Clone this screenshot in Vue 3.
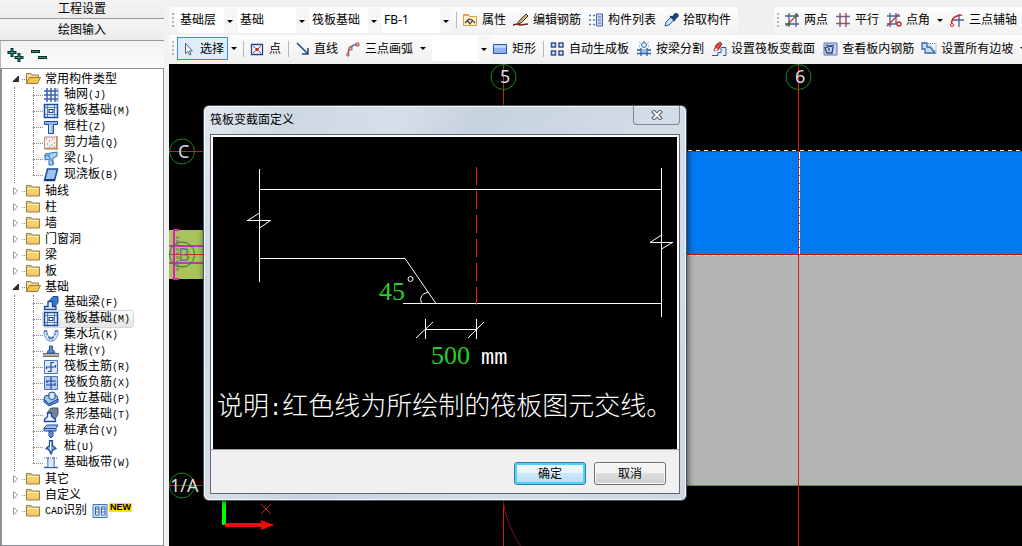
<script setup>
import { ref } from 'vue'

const icons = {
  folder: '<path d="M1.5 4V2.5H6l1 1.500h7.500v9h-13z" fill="#f3c766" stroke="#9c7a3c"/><path d="M2 6h12v4H2z" fill="#f7cf6c"/><path d="M2 5.500h12" stroke="#fdf0c0"/>',
  folderOpen: '<path d="M1.500 12V2.500H6l1 1.500h6.500V7" fill="#f7dc95" stroke="#9c7a3c"/><path d="M1.500 12.500L4.500 6.500H15.500L12.500 12.500z" fill="#f3c44f" stroke="#9c7a3c"/>',
  grid: '<path d="M1 4h14M1 8h14M1 12h14M4 1v14M8 1v14M12 1v14" stroke="#3a62b4" stroke-width="1.500" fill="none"/><path d="M13 2h2v12h-2" stroke="#7d9cd4" fill="none"/>',
  raft: '<path d="M1.500 1.500h13v13h-13z" fill="#e6f0fc" stroke="#1b4a98" stroke-width="1.500"/><path d="M4.500 2v12M11.500 2v12M2 4.500h12M2 11.500h12" stroke="#3b69b4" stroke-width=".8"/><path d="M6 6.500h4v3H6z" fill="#fff" stroke="#1b4a98" stroke-width="1.200"/>',
  column: '<path d="M1.500 2.500h13v3h-4v9h-5v-9h-4z" fill="#8db7ee" stroke="#1b4a98"/><path d="M7 6v8" stroke="#e8f3ff" stroke-width="1.500"/>',
  wall: '<path d="M1.500 2h12v12h-12z" fill="#f4efec" stroke="#b98f7a"/><path d="M3 4h1M6 6h1M9 4h1M4 9h1M8 10h1M11 8h1M6 12h1M11 12h1" stroke="#7a6d6a" stroke-width="1.200"/><path d="M14 1v14M1 13.500h13" stroke="#c98a52" stroke-width="1.500"/>',
  beam: '<path d="M2 3l12-2v4l-4 2v7H6V8L2 9z" fill="#a9d2f4" stroke="#2d73b8"/><path d="M5 4l6 9M2 5l5-1" stroke="#2d73b8"/>',
  slab: '<path d="M4.500 2h10l-3 11.500h-10z" fill="#9cc3f2" stroke="#1b4a98" stroke-width="1.500"/><path d="M2 13h9.500" stroke="#12366f" stroke-width="2"/>',
  fbeam: '<path d="M5 7l5-5.500h5v6l-5 6" fill="#3f78c2" stroke="#1b4a98"/><path d="M1.500 14.500v-3H5v-5h4.500v5H13v3z" fill="#dcebfc" stroke="#1b4a98" stroke-width="1.300"/>',
  pit: '<path d="M1 4h3l1 5q3 3 6 0l1-5h3v4l-3 5q-4 3-8 0L1 8z" fill="#d4e3f8" stroke="#5b86c6" stroke-width=".8"/><path d="M1 4h3M12 4h3M3 7h1M12 7h1M6 12h1M9 13h1M5 10q3 3 6 0" stroke="#1b4a98"/>',
  pier: '<path d="M0 10.500h16v3H0z" fill="#b5b2ad" stroke="#716e69"/><path d="M4 10l1.500-3h1V3h3v4h1L12 10z" fill="#5d8ed1" stroke="#2456a4"/>',
  mainbar: '<path d="M1.500 1.500h13v13h-13z" fill="#dbe7fa" stroke="#4d76bb"/><path d="M8 3v10M3 8h10M8 3.500h3M5 12.500h3M3.500 8v2M12.500 6v2" stroke="#1b4a98" stroke-width="1.200" fill="none"/>',
  negbar: '<path d="M1.500 1.500h13v13h-13z" fill="#b9cdf0" stroke="#4d76bb"/><path d="M8 2v12M3 6h10M3 10h10M4 6v2M12 10V8" stroke="#1b4a98" stroke-width="1.200" fill="none"/>',
  pad: '<path d="M1 8l5 5 9-4-1-4-4-2-8 2z" fill="#a5c8ef" stroke="#1b4a98"/><path d="M1 8v3l5 4 9-4V8l-9 5z" fill="#5f92d4" stroke="#1b4a98"/><path d="M6 7V2l3-1 3 1v5L9 9z" fill="#d9e9fb" stroke="#1b4a98"/>',
  strip: '<path d="M4 6l4-5h7v6l-4 7" fill="#738499" stroke="#3c526e"/><path d="M1.500 14.500v-2l3-3V6h4v3.500l4 3v2z" fill="#edf4fd" stroke="#1b4a98" stroke-width="1.300"/>',
  cap: '<path d="M1 5l3-3h11l-2 3v3H1z" fill="#9dc2ed" stroke="#1b4a98"/><path d="M1.500 5.500h11" stroke="#1b4a98"/><path d="M6 8h4v5l-2 2-2-2z" fill="#5f90d1" stroke="#1b4a98"/>',
  pile: '<path d="M6.500 1.500h3V7h1L13 9.500 10 11l-2 4-2-4-3-1.500L5.500 7h1z" fill="#7ba7e0" stroke="#1b4a98" stroke-width="1.200"/><path d="M7.500 3v8" stroke="#fff"/>',
  band: '<path d="M1 12.500h14M5 2v11M11 2v11" stroke="#3a62a4" stroke-width="1.300"/><path d="M5.500 4h5v8h-5z" fill="#d9e5f6"/><path d="M1 3h14" stroke="#3a62a4" stroke-dasharray="1 1"/>',
  cad: '<path d="M1 1.500h14v13H1z" fill="#cfe0f8" stroke="#3c74bd"/><path d="M3.500 4h3.500v8H3.500zM9.500 4H13v8H9.500z" fill="#fff" stroke="#2e62ac"/><path d="M3.500 6h3.500M3.500 9h3.500M9.500 6H13M9.500 9H13" stroke="#2e62ac"/>',
  prop: '<path d="M1.500 13.500V2.500h5l1 2h7v9z" fill="#fff2cf" stroke="#e09a3c"/><path d="M1 3h6" stroke="#e8a34a" stroke-width="2"/><path d="M3 11l4-4 3 1 3 3M5 8l3 4 2-3" stroke="#44463f" stroke-width="1.300" fill="none"/>',
  pen: '<path d="M0 13l4-1 3 1 8-1" stroke="#6b2323" fill="none" stroke-width="1.500"/><path d="M5 10L13 2l2 2-7 7-3 1z" fill="#d2ae72" stroke="#443629"/>',
  list: '<path d="M8.500 2h6v12h-6z" fill="#cddcf2" stroke="#45679d"/><path d="M10 5h3M10 8h3M10 11h3" stroke="#45679d"/><path d="M1 3.500h2M1 8h2M1 12.500h2M5 3.500h2M5 8h2M5 12.500h2" stroke="#4b76b8" stroke-width="1.500"/>',
  pick: '<path d="M2 14l1-4 6-6 3 3-6 6z" fill="#c9e0f7" stroke="#27588f"/><path d="M7 4l5 5M9 6l3-4q3-1 3 2l-4 4z" fill="#1f4b86" stroke="#163c70" stroke-width="1.500"/>',
  twop: '<path d="M1 4h14M1 12h14M5 1v14M12 1v14" stroke="#4a5f96" stroke-width="1.300"/><path d="M2 14L14 2" stroke="#b43a3a" stroke-width="1.300"/><path d="M4 11h2v2H4zM11 3h2v2h-2z" fill="#26843a" stroke="#26843a"/>',
  para: '<path d="M1 4.500h14M1 11.500h14" stroke="#5a6da6" stroke-width="1.500"/><path d="M5 1v14M11 1v14" stroke="#b0343e" stroke-width="1.300"/>',
  angle: '<path d="M1 4h13M1 12h10M4 1v14M10 1v11" stroke="#4a5f96" stroke-width="1.300"/><path d="M1 14L13 2" stroke="#b43a3a" stroke-width="1.300"/><circle cx="13" cy="12" r="2" fill="#fff" stroke="#d32323" stroke-width="1.300"/>',
  aux: '<path d="M3 8h12M10 2v13" stroke="#4a5f96" stroke-width="1.300"/><path d="M3 13Q1 4 13 3" stroke="#d32323" stroke-width="1.500" fill="none"/><circle cx="3" cy="13" r="1.500" fill="#fff" stroke="#d32323"/>',
  cursor: '<path d="M5.500 2.500v10l2.300-2 1.700 3.500 1.500-.7-1.600-3.300h3z" fill="#fff" stroke="#4d5f82"/>',
  point: '<path d="M2.500 3.500h11v10h-11z" fill="#fff" stroke="#2a3f8a" stroke-width="1.300"/><path d="M4 5l8 7M12 5l-8 7" stroke="#3c50a8"/><path d="M6.500 7h3v3h-3z" fill="#c82d2d"/>',
  line: '<path d="M3 2l11 11M14 7v6H8" stroke="#234a78" stroke-width="1.500" fill="none"/>',
  arc: '<path d="M3 14Q3 4 13 3" stroke="#3a62b4" stroke-width="1.500" fill="none"/><path d="M2 12h2v3H2zM4 6h3v3H4zM11 2h3v3h-3z" fill="#e9b0a0" stroke="#b0402c" stroke-width=".8"/>',
  rect: '<path d="M1.500 3.500h13v9h-13z" fill="#8fb4ec" stroke="#2a56a5"/><path d="M2 4h12v3H2z" fill="#bcd4f6"/>',
  auto: '<path d="M2.500 2h4v4h-4zM10 2h4v4h-4zM2.500 10h4v4h-4zM10 10h4v4h-4z" fill="#dfe9f8" stroke="#33538f" stroke-width="1.500"/>',
  split: '<path d="M1 9h4M11 9h4M1 12.500h14M5 7v8M11 7v8" stroke="#2d5da6" stroke-width="1.300"/><path d="M6 8h4v4H6z" fill="#8fc1ee"/><circle cx="8" cy="4" r="2.500" fill="#dbeafb" stroke="#3b74b8"/><path d="M8 0v1M3.500 1.500l1 1M12.500 1.500l-1 1M3 5h1M12 5h1" stroke="#3b74b8"/>',
  section: '<path d="M1 14.500h6v-3h3v-5h5v8h-3" fill="#e3ecfa" stroke="#3158a0"/><path d="M3 10l2-6 4-3 2 2-4 6z" fill="#e04a3d" stroke="#9c2e26"/><path d="M3 10l2-3 2 2z" fill="#fff"/>',
  view: '<path d="M2 2h13v12H2z" fill="#c2d2ee" stroke="#5676b5"/><path d="M4 4l7 2-1 6H5L3 7l9-3M7 7v3" stroke="#28457b" stroke-width="1.300" fill="none"/>',
  slope: '<path d="M1 2h5v4h3l5 6H4V8H1z" fill="#c9dcf6" stroke="#2d67b2" stroke-width="1.300"/><path d="M7 2.500h8v10M8 3l7 8" stroke="#5d86c2" stroke-dasharray="1 1" fill="none"/>',
}

const tree = [
  {
    label: '常用构件类型', open: true, children: [
      { icon: 'grid', label: '轴网', key: '(J)' },
      { icon: 'raft', label: '筏板基础', key: '(M)' },
      { icon: 'column', label: '框柱', key: '(Z)' },
      { icon: 'wall', label: '剪力墙', key: '(Q)' },
      { icon: 'beam', label: '梁', key: '(L)' },
      { icon: 'slab', label: '现浇板', key: '(B)' },
    ],
  },
  { label: '轴线' },
  { label: '柱' },
  { label: '墙' },
  { label: '门窗洞' },
  { label: '梁' },
  { label: '板' },
  {
    label: '基础', open: true, children: [
      { icon: 'fbeam', label: '基础梁', key: '(F)' },
      { icon: 'raft', label: '筏板基础', key: '(M)', selected: true },
      { icon: 'pit', label: '集水坑', key: '(K)' },
      { icon: 'pier', label: '柱墩', key: '(Y)' },
      { icon: 'mainbar', label: '筏板主筋', key: '(R)' },
      { icon: 'negbar', label: '筏板负筋', key: '(X)' },
      { icon: 'pad', label: '独立基础', key: '(P)' },
      { icon: 'strip', label: '条形基础', key: '(T)' },
      { icon: 'cap', label: '桩承台', key: '(V)' },
      { icon: 'pile', label: '桩', key: '(U)' },
      { icon: 'band', label: '基础板带', key: '(W)' },
    ],
  },
  { label: '其它' },
  { label: '自定义' },
  { prefix: 'CAD', label: '识别', isNew: true },
]

const combos = [
  { name: '楼层', value: '基础层', size: 'w58' },
  { name: '构件分类', value: '基础', size: 'w70' },
  { name: '构件类型', value: '筏板基础', size: 'w70' },
  { name: '构件名称', value: 'FB-1', size: 'w70' },
]

const componentTools = [
  { icon: 'prop', label: '属性' },
  { icon: 'pen', label: '编辑钢筋' },
  { icon: 'list', label: '构件列表' },
  { icon: 'pick', label: '拾取构件' },
]

const axisTools = [
  { icon: 'twop', label: '两点' },
  { icon: 'para', label: '平行' },
  { icon: 'angle', label: '点角', menu: true },
  { icon: 'aux', label: '三点辅轴' },
]

const slabTools = [
  { icon: 'auto', label: '自动生成板' },
  { icon: 'split', label: '按梁分割' },
  { icon: 'section', label: '设置筏板变截面' },
  { icon: 'view', label: '查看板内钢筋' },
  { icon: 'slope', label: '设置所有边坡', menu: true },
]

const dialogOpen = ref(true)
</script>

<template>
  <div class="app">
    <aside class="side">
      <button class="side-tab first">工程设置</button>
      <button class="side-tab">绘图输入</button>
      <div class="side-tools">
        <button class="plain" aria-label="全部展开">
          <svg width="18" height="16"><path d="M5 1v9M.5 5.500h9M12 6v9M7.500 10.500h9" stroke="#0b2d29" stroke-width="3" /><path d="M5 2v7M1.500 5.500h7M12 7v7M8.500 10.500h7" stroke="#1f9a83" /></svg>
        </button>
        <button class="plain" aria-label="全部折叠">
          <svg width="18" height="16"><path d="M0 4.500h9M7 10.500h9" stroke="#0b2d29" stroke-width="3" /><path d="M1 4.500h7M8 10.500h7" stroke="#1f9a83" /></svg>
        </button>
      </div>
      <ul class="tree">
        <li v-for="node in tree" :key="node.label">
          <button class="row">
            <svg class="twist" width="8" height="10">
              <path v-if="node.open" d="M6.500 2v5.500H1z" fill="#333" stroke="#222" />
              <path v-else d="M1.500 1.500v7l4-3.500z" fill="#fff" stroke="#999" />
            </svg>
            <span class="dash short"></span>
            <svg class="ico" width="16" height="16" viewBox="0 0 16 16" fill="none" v-html="node.open ? icons.folderOpen : icons.folder"></svg>
            <span class="name"><span v-if="node.prefix" class="key">{{ node.prefix }}</span>{{ node.label }}</span>
            <svg v-if="node.isNew" class="ico cad" width="16" height="16" viewBox="0 0 16 16" v-html="icons.cad"></svg>
            <span v-if="node.isNew" class="new">NEW</span>
          </button>
          <ul v-if="node.children" class="kids">
            <li v-for="kid in node.children" :key="kid.key" class="kid">
              <span class="dash"></span>
              <button class="row" :class="{ selected: kid.selected }">
                <svg class="ico" width="16" height="16" viewBox="0 0 16 16" fill="none" v-html="icons[kid.icon]"></svg>
                <span class="kid-name">{{ kid.label }}<span class="key">{{ kid.key }}</span></span>
              </button>
            </li>
          </ul>
        </li>
      </ul>
    </aside>

    <main class="main">
      <header class="bars">
        <div class="bar">
          <div class="group">
            <i class="grip"></i>
            <label v-for="c in combos" :key="c.name" class="combo" :class="c.size">
              <select :aria-label="c.name"><option>{{ c.value }}</option></select>
            </label>
            <i class="sep"></i>
            <button v-for="t in componentTools" :key="t.label" class="tool">
              <svg width="16" height="16" viewBox="0 0 16 16" fill="none" v-html="icons[t.icon]"></svg>{{ t.label }}
            </button>
          </div>
          <div class="group axis">
            <i class="grip"></i>
            <button v-for="t in axisTools" :key="t.label" class="tool" :class="{ menu: t.menu }">
              <svg width="16" height="16" viewBox="0 0 16 16" fill="none" v-html="icons[t.icon]"></svg>{{ t.label }}<i v-if="t.menu" class="caret"></i>
            </button>
          </div>
        </div>
        <div class="bar second">
          <i class="grip"></i>
          <button class="tool active">
            <svg width="16" height="16" viewBox="0 0 16 16" fill="none" v-html="icons.cursor"></svg>选择
          </button>
          <button class="drop" aria-label="选择方式"><i class="caret"></i></button>
          <i class="sep"></i>
          <button class="tool"><svg width="16" height="16" viewBox="0 0 16 16" fill="none" v-html="icons.point"></svg>点</button>
          <i class="sep"></i>
          <button class="tool"><svg width="16" height="16" viewBox="0 0 16 16" fill="none" v-html="icons.line"></svg>直线</button>
          <button class="tool menu"><svg width="16" height="16" viewBox="0 0 16 16" fill="none" v-html="icons.arc"></svg>三点画弧<i class="caret"></i></button>
          <label class="combo w58"><select aria-label="画弧参数"><option></option></select></label>
          <button class="tool"><svg width="16" height="16" viewBox="0 0 16 16" fill="none" v-html="icons.rect"></svg>矩形</button>
          <i class="sep"></i>
          <button v-for="t in slabTools" :key="t.label" class="tool" :class="{ menu: t.menu }">
            <svg width="16" height="16" viewBox="0 0 16 16" fill="none" v-html="icons[t.icon]"></svg>{{ t.label }}<i v-if="t.menu" class="caret"></i>
          </button>
        </div>
      </header>

      <section class="canvas">
        <svg class="plan" width="100%" height="100%">
          <g transform="translate(-169 -64)" fill="none" shape-rendering="crispEdges">
            <rect x="600" y="151" width="2400" height="103" fill="#007bf3" />
            <rect x="600" y="255" width="2400" height="230" fill="#b4b4b4" />
            <path d="M600 151.500H3000M600 254.500H3000" stroke="#c4141c" />
            <path d="M600 150.500H3000" stroke="#fff" stroke-dasharray="4 4" />
            <path d="M600 255.500H3000" stroke="#f7c4c4" stroke-dasharray="5 3" />
            <path d="M600 485.500H3000" stroke="#f0474f" />
            <path d="M799.500 152V254" stroke="#fff" stroke-dasharray="7 1" />
            <path d="M169 151.500H204M169 485.500H204M503.500 64V3000M798.500 64V3000" stroke="#d01c1c" />
            <rect x="169" y="230" width="36" height="49" fill="#a9c25c" />
            <path d="M177.500 236v36" stroke="#8b9a62" stroke-width="3" stroke-dasharray="3 1" />
            <path d="M169 254.500h36" stroke="#d6261c" />
            <path d="M169 245.500h36M169 262.500h36" stroke="#c137a8" stroke-width="2" />
            <path d="M179 230h-5v49h5" stroke="#ee12ce" stroke-width="2" />
            <g stroke="#1c8423" shape-rendering="auto">
              <circle cx="503.500" cy="77" r="12.500" />
              <circle cx="798.500" cy="77" r="12.500" />
              <circle cx="182" cy="151.500" r="12.500" />
              <circle cx="182" cy="254.500" r="12.500" />
              <circle cx="182" cy="485.500" r="12.500" />
            </g>
            <path d="M503 500Q506 524 521 547" stroke="#7e1414" shape-rendering="auto" />
            <path d="M224 500v25" stroke="#0f0" stroke-width="4" />
            <path d="M225 525h37" stroke="#e81010" stroke-width="4" />
            <path d="M261 520l13 5-13 5z" fill="#f00" />
            <path d="M261 504l10 10M271 504l-10 10" stroke="#c22" shape-rendering="auto" />
          </g>
          <g transform="translate(-169 -64)" class="marks" fill="#dcdcdc">
            <text x="500" y="83">5</text>
            <text x="795" y="83">6</text>
            <text x="178" y="158">C</text>
            <text x="178" y="261" fill="#6d7390">B</text>
            <text x="170" y="492">1/A</text>
          </g>
        </svg>

        <div v-if="dialogOpen" class="dialog" role="dialog" aria-labelledby="dlg-title">
          <div class="titlebar">
            <h1 id="dlg-title">筏板变截面定义</h1>
            <button class="close" aria-label="关闭" @click="dialogOpen = false">
              <svg width="12" height="10"><path d="M3 2l6 6M9 2L3 8" stroke="#555b66" stroke-width="4" stroke-linecap="square" /><path d="M3 2l6 6M9 2L3 8" stroke="#fff" stroke-width="2" stroke-linecap="square" /></svg>
            </button>
          </div>
          <div class="body">
            <div class="diagram">
              <svg width="464" height="312">
                <g transform="translate(-213 -137)" fill="none" stroke="#fff">
                  <g shape-rendering="crispEdges">
                    <path d="M259.500 169V282M259 189.500H662M661.500 168V317M259 258.500H405M403 303.500H662" />
                    <path d="M247 220.500H271M650 242.500H673M425 329.500H477M425.500 319V339M476.500 319V339" />
                    <path d="M476.500 167V305" stroke="#e82222" stroke-dasharray="18 6" />
                  </g>
                  <path d="M247.500 220.500L259.500 213M259.500 228L270.500 220.500M650 242.500L661.500 235M661.500 249L672.500 242.500M405 258.500L436 303.500" />
                  <path d="M416 338L433 322M468 338L484 322M421.500 303Q418 295 428 292" />
                  <circle cx="410.500" cy="279" r="2.500" />
                </g>
                <g transform="translate(-213 -137)">
                  <text class="num" x="379" y="300">45</text>
                  <text class="num" x="431" y="364">500</text>
                  <text class="unit" x="481" y="364">mm</text>
                  <text class="note" x="217" y="415">说明<tspan class="unit">:</tspan>红色线为所绘制的筏板图元交线。</text>
                </g>
              </svg>
            </div>
            <div class="actions">
              <button class="btn primary" @click="dialogOpen = false">确定</button>
              <button class="btn" @click="dialogOpen = false">取消</button>
            </div>
          </div>
        </div>
      </section>
    </main>
  </div>
</template>

<style>
body { background: #f0f0f0; }
</style>

<style scoped>
.app {
  display: grid;
  grid-template-columns: 164px minmax(0, 1fr);
  column-gap: 5px;
  height: 100vh;
  overflow: hidden;
  background: #f0f1f2;
  color: #000;
  font: 12px/16px "Liberation Sans", "Noto Sans CJK SC", sans-serif;
}
button, select { font: inherit; color: inherit; }
button { border: 0; background: none; padding: 0; white-space: nowrap; }
ul { list-style: none; margin: 0; padding: 0; }
svg { display: block; flex: none; }

.side { display: flex; flex-direction: column; min-height: 0; }
.side-tab {
  height: 22px;
  border-bottom: 1px solid #989898;
  background: linear-gradient(#f4f4f4, #ececec);
  flex: none;
}
.side-tab.first { height: 19px; }
.side-tools {
  display: flex;
  gap: 6px;
  padding: 6px 6px 5px;
  border-left: 1px solid #bbb;
  background: linear-gradient(#f2f2f2, #fbfbfb);
}
.tree {
  flex: 1;
  border: 1px solid #8a8f94;
  border-left-width: 2px;
  background: #fff;
  overflow: hidden;
  padding-top: 2px;
}
.row { display: flex; align-items: center; height: 16px; text-align: left; }
.tree > li > .row { padding-left: 10px; }
.dash { width: 10px; border-top: 1px dotted #888; flex: none; }
.dash.short { width: 3px; margin-left: 2px; }
.name { margin-left: 4px; }
.key { font: 10px/16px "Liberation Mono", monospace; }
.kids { margin-left: 12px; padding-left: 18px; border-left: 1px dotted #888; }
.kid { position: relative; display: flex; align-items: center; height: 16px; }
.kid::before {
  content: "";
  position: absolute;
  left: 0;
  top: 0;
  height: 100%;
  border-left: 1px dotted #888;
}
.kid:last-child::before { height: 50%; }
.kid-name { margin-left: 5px; }
.kid .row { padding-right: 3px; border-radius: 3px; }
.kid .selected { background: linear-gradient(#fafafa, #e6e6e6); box-shadow: 0 0 0 1px #d8d8d8; }
.cad { margin-left: 5px; }
.new {
  align-self: flex-start;
  margin-left: 1px;
  padding: 0 1px;
  background: #ffe300;
  font: bold 9px/9px "Liberation Sans", sans-serif;
}

.main { display: flex; flex-direction: column; min-width: 0; }
.bars { padding-top: 7px; background: #f0f0f0; overflow: hidden; }
.bar { display: flex; align-items: center; height: 26px; gap: 36px; }
.bar.second {
  gap: 0;
  height: 27px;
  margin-top: 2px;
  margin-bottom: 2px;
  padding-left: 3px;
  background: linear-gradient(#fdfdfd, #f0f0f0);
}
.group {
  display: flex;
  align-items: center;
  height: 26px;
  padding-left: 3px;
  border-radius: 3px;
  background: linear-gradient(#fdfdfd, #f2f2f2);
  flex: none;
}
.grip {
  width: 2px;
  height: 15px;
  margin-right: 4px;
  background: repeating-linear-gradient(#b4b4b4 0 2px, transparent 2px 4px);
  flex: none;
}
.second .grip { margin-right: 3px; }
.axis .grip { margin-right: 5px; }
.combo { position: relative; display: flex; height: 25px; margin-right: 2px; flex: none; }
.combo select {
  appearance: none;
  width: 100%;
  border: 0;
  padding: 0 2px;
  background: linear-gradient(90deg, #fff calc(100% - 12px), #f6f6f6 0);
  font-family: "Noto Sans", "Noto Sans CJK SC", sans-serif;
}
.combo::after, .caret {
  border: 3px solid transparent;
  border-top-color: #000;
  border-bottom: 0;
}
.combo::after { content: ""; position: absolute; right: 3px; top: 12px; }
.caret { width: 0; height: 0; margin-left: 3px; flex: none; }
.w58 { width: 58px; }
.w70 { width: 70px; }
.sep { width: 1px; height: 16px; margin: 0 5px 0 2px; background: #b5b8bc; flex: none; }
.tool { display: flex; align-items: center; gap: 4px; height: 23px; margin-right: 7px; flex: none; }
.tool.menu { margin-right: 6px; }
.tool.active {
  margin: 0;
  padding: 0 3px 0 2px;
  border: 1px solid #3d8ed8;
  background: #dfecfa;
}
.second .sep { margin: 0 5px 0 0; }
.drop { display: flex; width: 15px; flex: none; }

.canvas { position: relative; flex: 1; background: #000; overflow: hidden; }
.plan { position: absolute; inset: 0; }
.marks { font: 18px "Noto Sans", sans-serif; }

.dialog {
  position: absolute;
  left: 34px;
  top: 41px;
  box-sizing: border-box;
  padding: 0 6px 6px;
  border: 1px solid #4d535b;
  border-radius: 6px;
  background: linear-gradient(115deg, #e2e9f0 0%, #cdd8e3 14%, #d6dfe9 30%, #c6d2de 42%, #d3dde8 70%, #ccd7e2 100%);
  box-shadow: inset 0 0 0 1px #f3f7fa, 1px 1px 6px rgba(0, 0, 0, 0.6);
}
.titlebar { display: flex; justify-content: space-between; align-items: flex-start; height: 28px; }
.titlebar h1 { margin: 6px 0 0; font-size: 12px; font-weight: 400; }
.close {
  display: flex;
  align-items: center;
  justify-content: center;
  width: 47px;
  height: 19px;
  border: 1px solid #7e8894;
  border-top: 0;
  border-radius: 0 0 4px 4px;
}
.body { border: 1px solid #5f6872; background: #f0f0f0; }
.diagram { padding: 2px 2px 0; background: #fff; border-bottom: 1px solid #a0a0a0; }
.diagram svg { background: #000; }
.actions { display: flex; justify-content: flex-end; gap: 8px; padding: 12px 13px 8px; }
.btn {
  width: 72px;
  height: 23px;
  border: 1px solid #707070;
  border-radius: 3px;
  background: linear-gradient(#f3f3f3 0 45%, #dedede 50%, #cfcfcf);
  box-shadow: inset 0 0 0 1px #fafafa;
}
.primary {
  border-color: #2f7fb0;
  background: linear-gradient(#eaf6fd 0 45%, #cbe8fa 50%, #b6def6);
  box-shadow: inset 0 0 0 2px #52d0f5;
}
.num { font: 26px "Liberation Serif", serif; fill: #23d12b; }
.note { font: 300 26px "Noto Sans CJK SC", sans-serif; fill: #fff; }
.unit { font: 22px "Liberation Mono", monospace; fill: #fff; }
</style>
